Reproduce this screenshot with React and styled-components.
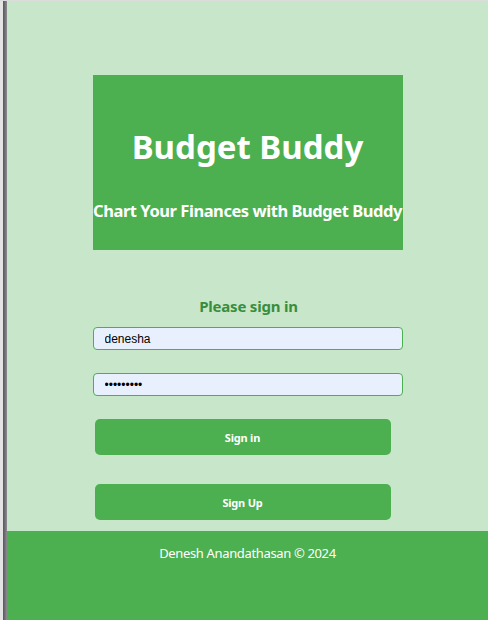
import styled, { createGlobalStyle } from "styled-components";

const GlobalStyle = createGlobalStyle`
  html, body {
    margin: 0;
    padding: 0;
    background: #c8e6c9;
  }
  body {
    font-family: "Noto Sans", "Open Sans", sans-serif;
  }
`;

const Frame = styled.div`
  display: flex;
  width: 488px;
  height: 620px;
  overflow: hidden;
  border-top: 1px solid #dcdcdc;
  box-sizing: border-box;
`;

const EdgeStrip = styled.div`
  width: 7px;
  flex: none;
  background: linear-gradient(to right, #e4e4e4 0, #e4e4e4 3px, #55555b 3px, #8c8c92 7px);
`;

const Page = styled.div`
  flex: 1;
  display: flex;
  flex-direction: column;
`;

const Main = styled.main`
  height: 530px;
  background: #c8e6c9;
  display: flex;
  flex-direction: column;
  align-items: center;
  padding-top: 74px;
  box-sizing: border-box;
`;

const Banner = styled.header`
  width: 310px;
  height: 175px;
  background: #4caf50;
  color: #fff;
  display: flex;
  flex-direction: column;
  align-items: center;
  text-align: center;
`;

const Title = styled.h1`
  margin: 52px 0 0;
  font-size: 33px;
  line-height: 40px;
  font-weight: 700;
`;

const Subtitle = styled.h2`
  margin: 33px 0 0;
  font-size: 16.5px;
  line-height: 22px;
  font-weight: 700;
  letter-spacing: -0.45px;
  white-space: nowrap;
`;

const Form = styled.form`
  width: 310px;
  display: flex;
  flex-direction: column;
  align-items: center;
  margin-top: 45px;
`;

const Heading = styled.h3`
  margin: 0 0 10px 2px;
  font-size: 15px;
  line-height: 22px;
  font-weight: 700;
  letter-spacing: -0.2px;
  color: #388e3c;
`;

const Input = styled.input`
  width: 310px;
  height: 23px;
  box-sizing: border-box;
  border: 1px solid #4caf50;
  border-radius: 4px;
  background: #e8f0fe;
  padding: 0 11px;
  font-family: "Liberation Sans", Arial, sans-serif;
  font-size: 12px;
  color: #000;
  margin-bottom: ${(p) => p.$gap}px;
  outline: none;
`;

const Button = styled.button`
  width: 296px;
  height: 36px;
  margin-left: -10px;
  margin-bottom: ${(p) => p.$gap}px;
  border: none;
  border-radius: 5px;
  background: #4caf50;
  color: #fff;
  font-family: "Noto Sans", sans-serif;
  font-size: 11px;
  font-weight: 700;
  letter-spacing: -0.2px;
  cursor: pointer;
`;

const Footer = styled.footer`
  flex: 1;
  background: #4caf50;
  color: #fff;
  text-align: center;
  padding-top: 13px;
  font-size: 13px;
  line-height: 19px;
  letter-spacing: -0.35px;
`;

export default function App() {
  return (
    <>
      <GlobalStyle />
      <Frame>
        <EdgeStrip />
        <Page>
          <Main>
            <Banner>
              <Title>Budget Buddy</Title>
              <Subtitle>Chart Your Finances with Budget Buddy</Subtitle>
            </Banner>
            <Form onSubmit={(e) => e.preventDefault()}>
              <Heading>Please sign in</Heading>
              <Input $gap={23} type="text" defaultValue="denesha" />
              <Input $gap={23} type="password" defaultValue="password1" />
              <Button $gap={29} type="submit">Sign in</Button>
              <Button $gap={0} type="button">Sign Up</Button>
            </Form>
          </Main>
          <Footer>Denesh Anandathasan © 2024</Footer>
        </Page>
      </Frame>
    </>
  );
}
